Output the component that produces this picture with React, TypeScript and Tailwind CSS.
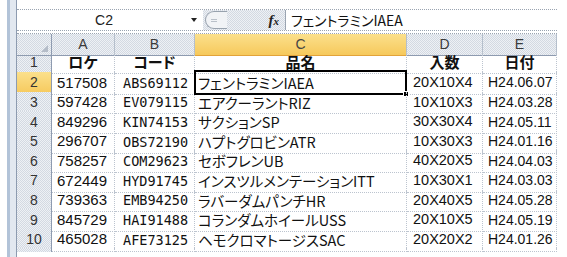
import React from "react";

// worksheet contents: row 1 is the header line
const rows: string[][] = [
  ["517508", "ABS69112", "フェントラミンIAEA", "20X10X4", "H24.06.07"],
  ["597428", "EV079115", "エアクーラントRIZ", "10X10X3", "H24.03.28"],
  ["849296", "KIN74153", "サクションSP", "30X30X4", "H24.05.11"],
  ["296707", "OBS72190", "ハプトグロビンATR", "10X30X3", "H24.01.16"],
  ["758257", "COM29623", "セボフレンUB", "40X20X5", "H24.04.03"],
  ["672449", "HYD91745", "インスツルメンテーションITT", "10X30X1", "H24.03.03"],
  ["739363", "EMB94250", "ラバーダムパンチHR", "20X40X5", "H24.05.28"],
  ["845729", "HAI91488", "コランダムホイールUSS", "20X10X5", "H24.05.19"],
  ["465028", "AFE73125", "ヘモクロマトージスSAC", "20X20X2", "H24.01.26"],
];

const cols = ["A", "B", "C", "D", "E"];
const titles = ["ロケ", "コード", "品名", "入数", "日付"];

const grid = "grid grid-cols-[35px_63px_80px_212px_76px_74px]";
const dither =
  "bg-[repeating-conic-gradient(#d3d9e2_0_25%,#eef1f5_0_50%)] bg-[length:2px_2px]";
const sans = "font-['Liberation_Sans','Noto_Sans_CJK_JP',sans-serif]";
const jp = "font-['Noto_Sans_CJK_JP',sans-serif] [font-feature-settings:'palt']";
const cell = "border-r border-b border-dotted border-[#bcc4cf] flex items-center overflow-hidden whitespace-nowrap";
const rowHead =
  "flex items-center justify-center border-b border-[#aab4c2] border-r border-r-[#8e9bb0] text-[14px] text-[#333]";

function FormulaBar() {
  return (
    <div className="flex h-[22px] border-y border-dotted border-[#9aa4b1]">
      <div className="flex w-[186px] items-center bg-white">
        <span className={`flex-1 text-center text-[14px] text-[#222] ${sans}`}>C2</span>
        <span className="mr-[6px] h-0 w-0 border-x-[3px] border-t-[4px] border-x-transparent border-t-[#222]" />
      </div>
      <div className={`flex w-[82px] items-center ${dither}`}>
        <div className="ml-[2px] flex h-[18px] w-[22px] items-center rounded-l-full border border-r-0 border-[#98a2ae] bg-[#f1f3f6] pl-[5px]">
          <span className="h-[3px] w-[6px] border-y border-[#b9c0c9]" />
        </div>
        <span className="ml-auto mr-[6px] font-['Liberation_Serif',serif] text-[15px] font-bold italic text-[#222]">
          f<span className="text-[11px]">x</span>
        </span>
      </div>
      <div className="w-px bg-[#9aa4b1]" />
      <div className={`flex flex-1 items-center bg-white pl-[5px] text-[14px] text-[#111] ${jp}`}>
        フェントラミンIAEA
      </div>
    </div>
  );
}

export default function App() {
  return (
    <div className="flex h-[257px] w-[567px] overflow-hidden bg-white">
      {/* window frame on the left */}
      <div className="w-[7px]" />
      <div className="w-[3px] bg-[#b2c3d8]" />
      <div className="w-[6px] bg-[#e2e8f0]" />
      <div className="w-px bg-[#8d9bb0]" />

      <div className="flex w-[540px] flex-col">
        <div className="h-[9px]" />
        <FormulaBar />
        <div className="h-[3px] border-b border-dotted border-[#9aa4b1]" />

        {/* column headers */}
        <div className={`${grid} h-[18px] ${sans} text-[14px] text-[#3a3a3a]`}>
          <div className={`relative border-r border-r-[#8e9bb0] border-b border-[#8e9bb0] ${dither}`}>
            <span className="absolute bottom-[3px] right-[3px] h-0 w-0 border-b-[7px] border-l-[7px] border-l-transparent border-b-[#b4bcc8]" />
          </div>
          {cols.map((c) => (
            <div
              key={c}
              className={`flex items-center justify-center border-r border-[#b5bfcc] border-b ${
                c === "C"
                  ? "border-b-[#e2a33a] bg-[linear-gradient(#fbe08c,#f6c95c)] text-[#444]"
                  : `border-b-[#8e9bb0] ${dither}`
              }`}
            >
              {c}
            </div>
          ))}
        </div>

        {/* row 1: titles */}
        <div className={`${grid} h-[20px]`}>
          <div className={`${rowHead} ${sans} ${dither}`}>1</div>
          {titles.map((t) => (
            <div key={t} className={`${cell} justify-center ${jp} text-[15px] font-bold text-[#111]`}>
              {t}
            </div>
          ))}
        </div>

        {rows.map((r, i) => {
          const n = i + 2;
          const sel = n === 2;
          return (
            <div key={n} className={`${grid} h-[19.6px]`}>
              <div
                className={`${rowHead} ${sans} ${
                  sel ? "bg-[linear-gradient(#fbe08c,#f6c95c)] border-b-[#e2a33a]" : dither
                }`}
              >
                {n}
              </div>
              <div className={`${cell} pl-[5px] ${sans} text-[15px] text-[#111]`}>{r[0]}</div>
              <div className={`${cell} pl-[8px] font-['DejaVu_Sans_Mono',monospace] text-[13.5px] text-[#111]`}>
                {r[1]}
              </div>
              <div className={`${cell} relative pl-[3px] ${jp} text-[14.5px] text-[#111] overflow-visible`}>
                {r[2]}
                {sel && (
                  <>
                    <span className="pointer-events-none absolute -left-px -top-[2px] -bottom-px -right-px border-[2.5px] border-black" />
                    <span className="absolute -bottom-[3px] -right-[3px] h-[6px] w-[6px] border border-white bg-black" />
                  </>
                )}
              </div>
              <div className={`${cell} pl-[6px] ${sans} text-[14.5px] text-[#111]`}>{r[3]}</div>
              <div className={`${cell} pl-[5px] ${sans} text-[14px] text-[#111]`}>{r[4]}</div>
            </div>
          );
        })}

        {/* next row, cut off by the window */}
        <div className={`${grid} h-[4px]`}>
          <div className={`border-r border-r-[#8e9bb0] ${dither}`} />
          {cols.map((c) => (
            <div key={c} className="border-r border-dotted border-[#bcc4cf]" />
          ))}
        </div>
      </div>
    </div>
  );
}
